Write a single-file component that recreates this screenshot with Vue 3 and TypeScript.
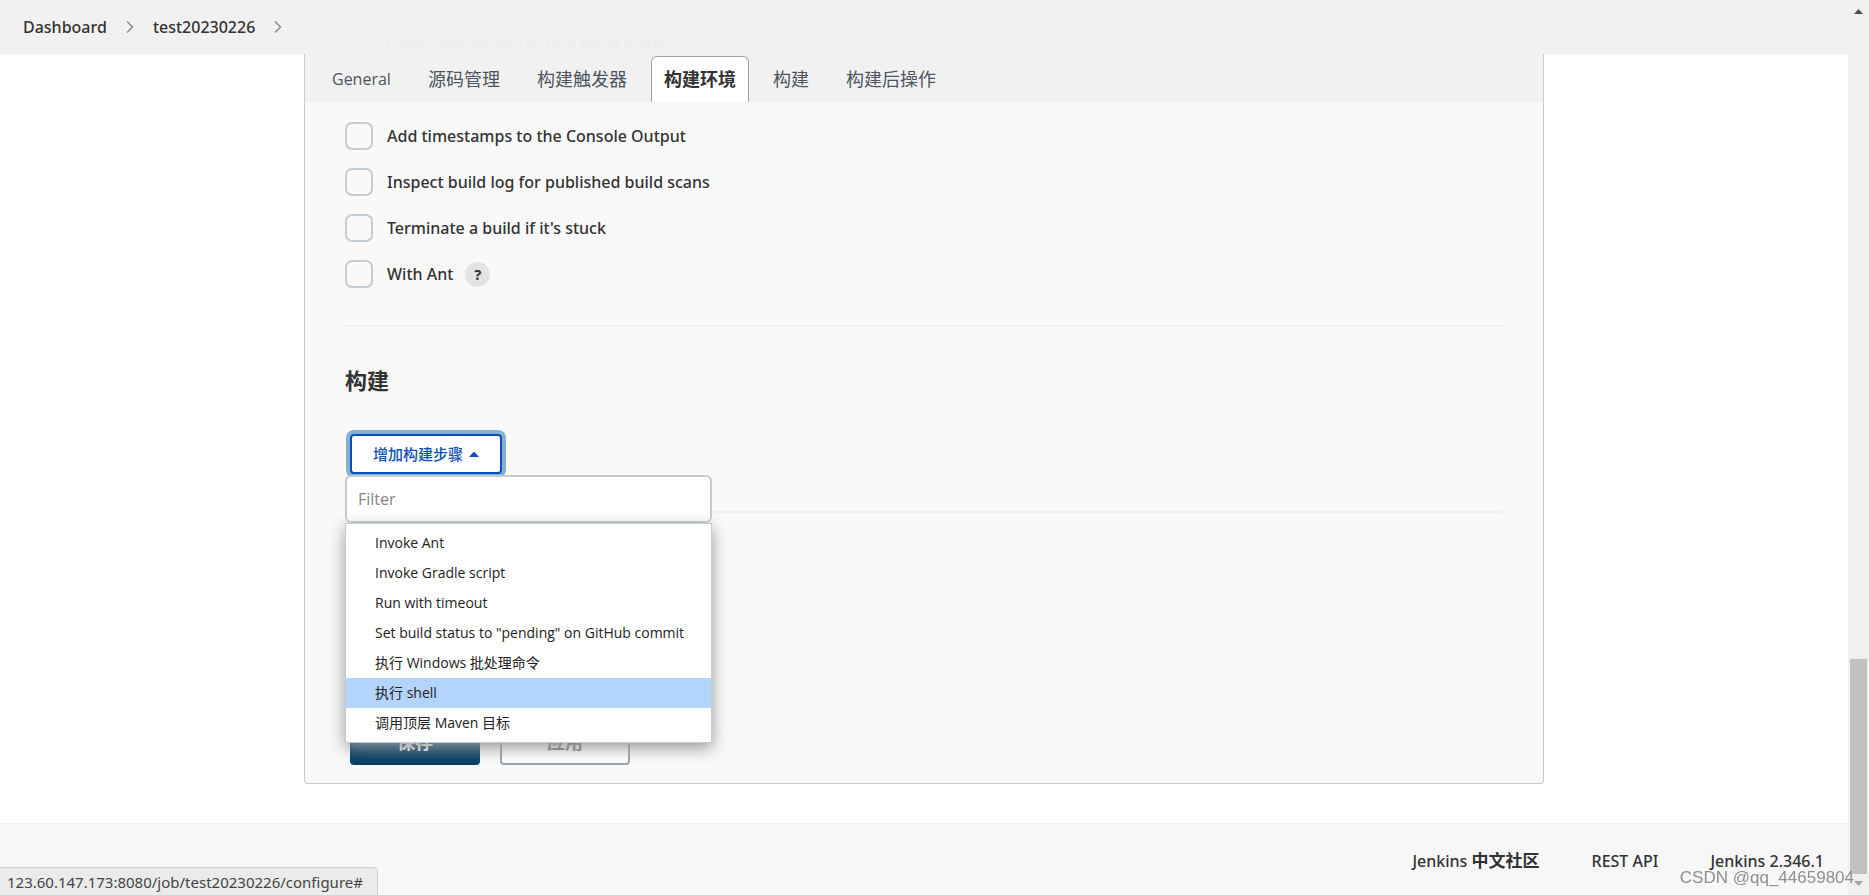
<script setup lang="ts">
import { ref } from 'vue'

interface BuildOption {
  id: string
  label: string
  help?: boolean
}

const crumbs: string[] = ['Dashboard', 'test20230226']
const tabs: string[] = ['General', '源码管理', '构建触发器', '构建环境', '构建', '构建后操作']
const activeTab = ref('构建环境')

const options: BuildOption[] = [
  { id: 'timestamps', label: 'Add timestamps to the Console Output' },
  { id: 'scans', label: 'Inspect build log for published build scans' },
  { id: 'stuck', label: "Terminate a build if it's stuck" },
  { id: 'ant', label: 'With Ant', help: true },
]
const checked = ref<string[]>([])

const steps: string[] = [
  'Invoke Ant',
  'Invoke Gradle script',
  'Run with timeout',
  'Set build status to "pending" on GitHub commit',
  '执行 Windows 批处理命令',
  '执行 shell',
  '调用顶层 Maven 目标',
]
const highlighted = ref('执行 shell')
const filter = ref('')
</script>

<template>
  <div class="window">
    <div class="page">
      <header class="breadcrumbs">
        <nav class="crumb-list" aria-label="Breadcrumb">
          <template v-for="crumb in crumbs" :key="crumb">
            <a class="crumb" href="#">{{ crumb }}</a>
            <svg class="chevron" viewBox="0 0 8 12" aria-hidden="true">
              <path d="M1 .5L6.500 6 1 11.500" />
            </svg>
          </template>
        </nav>
        <span class="scrolled-row" aria-hidden="true">Delete workspace before build starts</span>
      </header>

      <main class="panel">
        <nav class="tabs">
          <button
            v-for="tab in tabs"
            :key="tab"
            type="button"
            class="tab"
            :class="{ active: tab === activeTab }"
            @click="activeTab = tab"
          >{{ tab }}</button>
        </nav>

        <form class="config" @submit.prevent>
          <div class="options">
            <div v-for="option in options" :key="option.id" class="option">
              <input :id="option.id" v-model="checked" class="check" type="checkbox" :value="option.id">
              <label :for="option.id">{{ option.label }}</label>
              <button v-if="option.help" type="button" class="help" aria-label="Help">?</button>
            </div>
          </div>

          <section class="build">
            <h2>构建</h2>
            <div class="step-picker">
              <button type="button" class="add-step">
                增加构建步骤
                <svg class="caret" viewBox="0 0 10 5" aria-hidden="true"><path d="M0 5L4 .5Q5-.4 6 .5L10 5z" /></svg>
              </button>
              <div class="dropdown">
                <input v-model="filter" class="filter" type="text" placeholder="Filter" aria-label="Filter">
                <ul class="menu">
                  <li v-for="step in steps" :key="step">
                    <a
                      href="#"
                      class="menu-item"
                      :class="{ selected: step === highlighted }"
                      @mouseenter="highlighted = step"
                    >{{ step }}</a>
                  </li>
                </ul>
              </div>
            </div>
          </section>

          <div class="actions">
            <button type="submit" class="save">保存</button>
            <button type="button" class="apply">应用</button>
          </div>
        </form>
      </main>

      <footer class="footer">
        <a href="#">Jenkins <b>中文社区</b></a>
        <a href="#">REST API</a>
        <a href="#">Jenkins 2.346.1</a>
      </footer>
    </div>

    <div class="scrollbar" aria-hidden="true">
      <svg class="arrow" viewBox="0 0 21 21"><path d="M6 14l4.500-5L15 14z" fill="#505050" /></svg>
      <div class="track"></div>
      <div class="thumb"></div>
      <svg class="arrow" viewBox="0 0 21 21"><path d="M6 7l4.500 5L15 7z" fill="#a3a3a3" /></svg>
    </div>

    <div class="status">123.60.147.173:8080/job/test20230226/configure#</div>
    <div class="watermark">CSDN @qq_44659804</div>
  </div>
</template>

<style>
body {
  margin: 0;
}
</style>

<style scoped>
.window {
  display: grid;
  grid-template-columns: 1fr 21px;
  min-height: 100vh;
  background: #fff;
  color: #333;
  font: 500 16px/24px "Noto Sans", "Noto Sans CJK SC", sans-serif;
}

.window *,
.window *::before {
  box-sizing: border-box;
}

button,
input {
  margin: 0;
  padding: 0;
  font: inherit;
  color: inherit;
}

button {
  cursor: pointer;
}

a {
  color: inherit;
  text-decoration: none;
}

.page {
  display: flex;
  flex-direction: column;
  min-width: 0;
}

.breadcrumbs {
  position: relative;
  display: flex;
  align-items: center;
  height: 54px;
  padding: 0 23px;
  background: #f1f1f1;
}

.crumb-list {
  display: flex;
  align-items: center;
}

.chevron {
  width: 8px;
  height: 12px;
  margin: 0 19px;
  fill: none;
  stroke: #8c8c8c;
  stroke-width: 1.5;
}

.scrolled-row {
  position: absolute;
  left: 386px;
  top: 30px;
  color: #eeeeee;
}

.panel {
  width: calc(100% - 608px);
  min-width: 760px;
  margin: 0 auto;
  border: 1px solid #c3cdcf;
  border-top: 0;
  border-radius: 0 0 4px 4px;
  background: #f9f9f9;
}

.tabs {
  display: flex;
  gap: 11px;
  height: 48px;
  padding: 2px 14px 0;
  background: #f1f1f1;
}

.tab {
  padding: 0 12px 2px;
  border: 1px solid transparent;
  border-bottom: 0;
  border-radius: 6px 6px 0 0;
  background: none;
  color: #4d545d;
  font-family: "Open Sans", "Noto Sans CJK SC", sans-serif;
  font-size: 18px;
  font-weight: 400;
}

.tab:first-child {
  font-size: 16px;
}

.tab.active {
  border-color: #98a6b2;
  background: #fff;
  color: #333;
  font-weight: 700;
}

.config {
  padding: 20px 40px 18px;
}

.options {
  display: flex;
  flex-direction: column;
  gap: 18px;
  padding-bottom: 37px;
  border-bottom: 2px solid #f1f1f1;
}

.option {
  display: flex;
  align-items: center;
  height: 28px;
}

.check {
  appearance: none;
  width: 28px;
  height: 28px;
  margin-right: 14px;
  border: 2px solid #c3cdd3;
  border-radius: 7px;
}

.help {
  width: 25px;
  height: 25px;
  margin-left: 12px;
  border: 0;
  border-radius: 50%;
  background: #e4e4e4;
  font-size: 15px;
  line-height: 25px;
  font-weight: 700;
}

.build {
  padding: 37px 0 37px;
  border-bottom: 2px solid #f1f1f1;
}

h2 {
  margin: 0;
  font-family: "Open Sans", "Noto Sans CJK SC", sans-serif;
  font-size: 22px;
  line-height: 32px;
  font-weight: 700;
}

.step-picker {
  position: relative;
  display: flex;
  padding: 38px 5px 0;
}

.add-step {
  display: flex;
  align-items: center;
  gap: 6px;
  height: 40px;
  padding: 0 21px;
  border: 2px solid #0b4fbb;
  border-radius: 4px;
  background: #fff;
  box-shadow: 0 0 0 4px #83b1cf;
  color: #0b4fbb;
  font-size: 15px;
  font-weight: 500;
}

.caret {
  width: 10px;
  height: 5px;
  fill: currentColor;
}

.dropdown {
  position: absolute;
  top: 79px;
  left: 0;
  z-index: 2;
  width: 367px;
  font-family: "Open Sans", "Noto Sans CJK SC", sans-serif;
  font-weight: 400;
}

.filter {
  display: block;
  width: 100%;
  height: 48px;
  padding: 0 11px;
  border: 2px solid #c3cdd1;
  border-radius: 6px;
  background: #fff;
}

.filter::placeholder {
  color: #858585;
}

.menu {
  margin: 0;
  padding: 4px 0;
  border: 1px solid #c3cdd1;
  background: #fff;
  box-shadow: 0 5px 15px #999;
  color: #222;
  font-size: 14px;
  line-height: 30px;
  list-style: none;
  white-space: nowrap;
}

.menu-item {
  display: block;
  height: 30px;
  padding: 0 29px;
}

.menu-item.selected {
  background: #b3d4ff;
}

.actions {
  display: flex;
  gap: 20px;
  padding: 206px 5px 0;
}

.save,
.apply {
  width: 130px;
  height: 46px;
  border-radius: 4px;
  font-size: 18px;
  font-weight: 700;
}

.save {
  border: 0;
  background: #073f63;
  color: #fff;
}

.apply {
  border: 2px solid #98a6b0;
  background: #fff;
  color: #72777f;
}

.footer {
  display: flex;
  flex: 1;
  gap: 52px;
  align-items: center;
  justify-content: flex-end;
  margin-top: 39px;
  padding: 2px 24px 0;
  border-top: 1px solid #efefef;
  background: #f7f7f7;
}

.footer b {
  font-size: 17px;
}

.scrollbar {
  display: flex;
  flex-direction: column;
  align-items: center;
  background: #f0f0f0;
}

.arrow {
  flex: none;
  width: 21px;
  height: 21px;
}

.track {
  flex: 638;
}

.thumb {
  flex: 215;
  width: 17px;
  background: #c1c1c1;
}

.status {
  position: fixed;
  bottom: 0;
  left: 0;
  height: 28px;
  padding: 0 14px 0 7px;
  border: 1px solid #d2d2d2;
  border-width: 1px 1px 0 0;
  border-radius: 0 5px 0 0;
  background: #ebebeb;
  color: #444;
  font-size: 15px;
  font-weight: 400;
  line-height: 28px;
}

.watermark {
  position: fixed;
  right: 15px;
  bottom: 5px;
  color: #8f8f8f;
  font: 400 17px/24px "Liberation Sans", sans-serif;
}
</style>
